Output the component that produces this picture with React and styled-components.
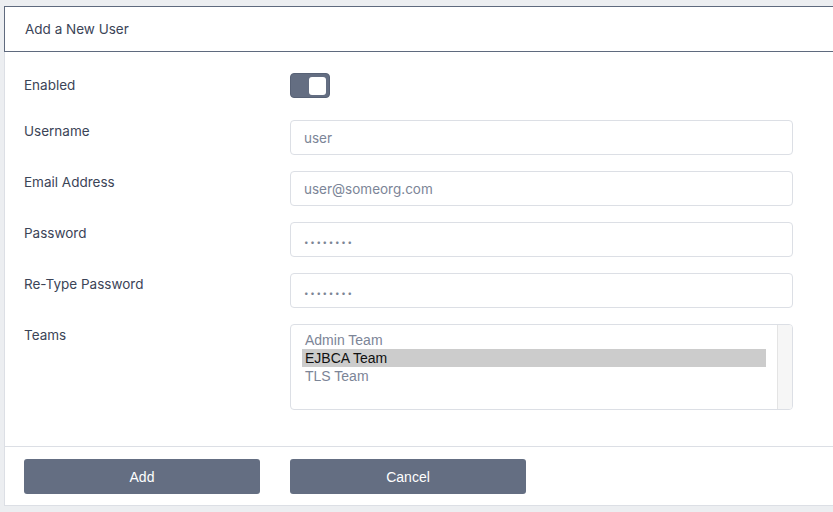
import React, { useState } from "react";
import styled, { createGlobalStyle } from "styled-components";

const GlobalStyle = createGlobalStyle`
  html, body {
    margin: 0;
    padding: 0;
    background: #eceef1;
    overflow: hidden;
  }
  body {
    font-family: Inter, "Liberation Sans", sans-serif;
    color: #3b4457;
  }
`;

const teams = ["Admin Team", "EJBCA Team", "TLS Team"];

const App = () => {
  const [enabled, setEnabled] = useState(true);
  const [team, setTeam] = useState("EJBCA Team");

  return (
    <Page>
      <GlobalStyle />
      <Card>
        <Header>Add a New User</Header>
        <Body>
          <ToggleRow>
            <Label>Enabled</Label>
            <Toggle on={enabled} onClick={() => setEnabled(!enabled)}>
              <Knob />
            </Toggle>
          </ToggleRow>
          <Row>
            <Label>Username</Label>
            <Input placeholder="user" />
          </Row>
          <Row>
            <Label>Email Address</Label>
            <Input placeholder="user@someorg.com" />
          </Row>
          <Row>
            <Label>Password</Label>
            <Input dots placeholder="••••••••" />
          </Row>
          <Row>
            <Label>Re-Type Password</Label>
            <Input dots placeholder="••••••••" />
          </Row>
          <Row>
            <Label>Teams</Label>
            <ListBox>
              <Options>
                {teams.map((t) => (
                  <Option key={t} selected={t === team} onClick={() => setTeam(t)}>
                    {t}
                  </Option>
                ))}
              </Options>
              <Track />
            </ListBox>
          </Row>
        </Body>
        <Footer>
          <Button>Add</Button>
          <Button>Cancel</Button>
        </Footer>
      </Card>
    </Page>
  );
};

export default App;

const Page = styled.div`
  padding: 6px 0 0 4px;
`;

const Card = styled.div`
  width: 850px;
  background: #fff;
  border: 1px solid #dcdfe5;
  border-top: none;
`;

const Header = styled.div`
  height: 44px;
  display: flex;
  align-items: center;
  padding-left: 20px;
  border: 1px solid #5f6a7e;
  margin-left: -1px;
  font-size: 13.5px;
  color: #3b4457;
`;

const Body = styled.div`
  padding: 21px 19px 36px;
  border-bottom: 1px solid #dcdfe5;
`;

const Row = styled.div`
  display: grid;
  grid-template-columns: 266px 503px;
  align-items: start;
  margin-bottom: 16px;
  &:last-child {
    margin-bottom: 0;
  }
`;

const ToggleRow = styled(Row)`
  align-items: center;
  margin-bottom: 22px;
`;

const Label = styled.div`
  font-size: 13.5px;
  line-height: 20px;
  padding-top: 1px;
  color: #3b4457;
  ${ToggleRow} & {
    padding-top: 0;
    margin-top: -2px;
  }
`;

const Toggle = styled.div`
  width: 40px;
  height: 25px;
  box-sizing: border-box;
  border-radius: 4px;
  background: ${(p) => (p.on ? "#646e82" : "#c9ced6")};
  border: 1px solid #586276;
  display: flex;
  align-items: center;
  justify-content: ${(p) => (p.on ? "flex-end" : "flex-start")};
  padding: 0 3px;
  cursor: pointer;
`;

const Knob = styled.div`
  width: 17px;
  height: 18px;
  border-radius: 3px;
  background: #fff;
`;

const Input = styled.input`
  box-sizing: border-box;
  width: 503px;
  height: 35px;
  border: 1px solid #dcdfe5;
  border-radius: 4px;
  padding: 0 13px;
  font-family: Inter, "Liberation Sans", sans-serif;
  font-size: 13.5px;
  color: #3b4457;
  outline: none;
  &::placeholder {
    color: ${(p) => (p.dots ? "#7c8595" : "#7c8597")};
    font-size: ${(p) => (p.dots ? "8px" : "13.5px")};
    letter-spacing: ${(p) => (p.dots ? "1.7px" : "normal")};
  }
`;

const ListBox = styled.div`
  box-sizing: border-box;
  width: 503px;
  height: 86px;
  border: 1px solid #dcdfe5;
  border-radius: 4px;
  display: flex;
  overflow: hidden;
`;

const Options = styled.div`
  flex: 1;
  padding: 6px 11px 0 11px;
`;

const Option = styled.div`
  height: 18px;
  line-height: 18px;
  padding-left: 3px;
  font-family: "Liberation Sans", Arial, sans-serif;
  font-size: 14px;
  color: ${(p) => (p.selected ? "#111" : "#7c8597")};
  background: ${(p) => (p.selected ? "#cccccc" : "transparent")};
  cursor: default;
`;

const Track = styled.div`
  width: 14px;
  background: #f6f6f6;
  border-left: 1px solid #e4e4e4;
`;

const Footer = styled.div`
  display: flex;
  gap: 30px;
  padding: 12px 19px 11px;
`;

const Button = styled.button`
  width: 236px;
  height: 35px;
  border: none;
  border-radius: 3px;
  background: #646e82;
  color: #fff;
  font-family: "Liberation Sans", Arial, sans-serif;
  font-size: 14px;
  cursor: pointer;
`;
